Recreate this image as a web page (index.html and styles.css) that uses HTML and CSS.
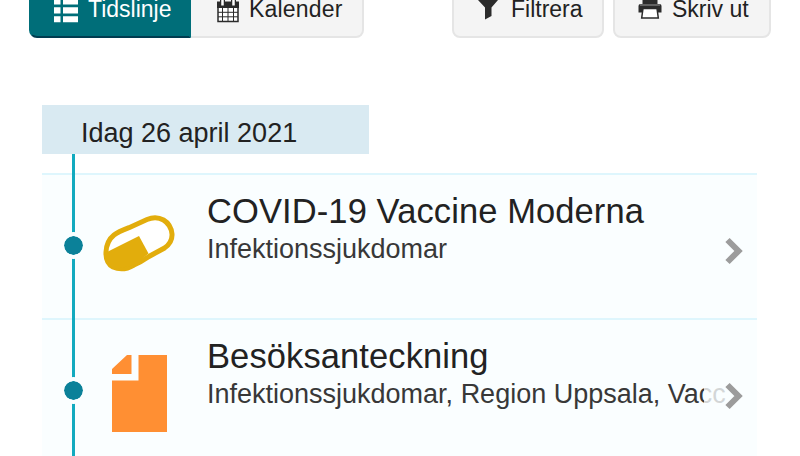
FILE: index.html
```
<!DOCTYPE html>
<html lang="sv">
<head>
    <meta charset="UTF-8">
    <meta name="viewport" content="width=device-width, initial-scale=1.0">
    <title>Journalen - Tidslinje</title>
    <link rel="stylesheet" href="styles.css">
</head>
<body>
    <div class="toolbar">
        <div class="view-switch">
            <button class="btn btn-timeline active">
                <svg width="25" height="26" viewBox="0 0 25 26" fill="currentColor">
                    <path d="M0 1h6.500v6.500H0zM9 1h15v6.500H9zM0 10.200h6.500v6.300H0zM9 10.200h15v6.300H9zM0 19.300h6.500v6H0zM9 19.300h15v6H9z"/>
                </svg>
                <span>Tidslinje</span>
            </button>
            <button class="btn btn-calendar">
                <svg width="22" height="26" viewBox="0 0 22 26">
                    <path d="M1 7h20v17.500H1z" fill="#fff" stroke="#2b2b2b" stroke-width="1.500"/>
                    <path d="M0 4.500h22V11H0z" fill="#2b2b2b"/>
                    <path d="M5.500 11v13M11 11v13M16.500 11v13M1 15.300h20M1 19.800h20" stroke="#2b2b2b" stroke-width="1"/>
                    <path d="M5.500 1v8M16.500 1v8" stroke="#2b2b2b" stroke-width="5"/>
                    <path d="M5.500 1v7.500M16.500 1v7.500" stroke="#fff" stroke-width="2.500"/>
                </svg>
                <span>Kalender</span>
            </button>
        </div>
        <div class="tools">
            <button class="btn btn-filter">
                <svg width="20" height="26" viewBox="0 0 20 26">
                    <path d="M0 1h20v2L13.500 10.500v8.500L7 22.500v-12L0 3z" fill="#2b2b2b"/>
                </svg>
                <span>Filtrera</span>
            </button>
            <button class="btn btn-print">
                <svg width="24" height="26" viewBox="0 0 24 26">
                    <path d="M4.500 1h15v8h-15z" fill="#2b2b2b"/>
                    <path d="M2.500 7h19q2 0 2 2v6.500H.500V9q0-2 2-2z" fill="#2b2b2b"/>
                    <path d="M2 8h20" stroke="#999" stroke-width="1"/>
                    <path d="M5 11.500h14l1.300 9.500H3.700z" fill="#fff" stroke="#2b2b2b" stroke-width="1.500"/>
                </svg>
                <span>Skriv ut</span>
            </button>
        </div>
    </div>

    <main class="timeline">
        <h2 class="date">Idag 26 april 2021</h2>
        <div class="events">
            <a class="event">
                <span class="dot"></span>
                <span class="event-icon">
                    <svg width="72" height="58" viewBox="0 0 72 58">
                        <path d="M11 20Q15 17 26 12.700L44 4.500Q53 .800 60.500 5Q68 9.500 69 19Q69.500 27.500 61.500 33Q56 36 46 41.500Q38 47 31 50Q20 56.500 10 52Q2.500 48 3 37Q3.500 26 11 20z" fill="#fff" stroke="#e2ad0c" stroke-width="5"/>
                        <path d="M5 36.500L36 21L45.500 38.500L32 50L12 54L3 45z" fill="#e2ad0c"/>
                    </svg>
                </span>
                <span class="event-text">
                    <span class="event-title">COVID-19 Vaccine Moderna</span>
                    <span class="event-info">Infektionssjukdomar</span>
                </span>
                <svg class="chevron" width="18" height="28" viewBox="0 0 18 28"><path d="M2.500 3L13.500 14L2.500 25"/></svg>
            </a>
            <a class="event">
                <span class="dot"></span>
                <span class="event-icon document">
                    <svg width="72" height="78" viewBox="0 0 72 78" fill="#ff8f33">
                        <path d="M9 14L24 0h4.500v19H9zM35.500 0H64v77H9V25.500h26.500z"/>
                    </svg>
                </span>
                <span class="event-text">
                    <span class="event-title">Besöksanteckning</span>
                    <span class="event-info">Infektionssjukdomar, Region Uppsala, Vacc</span>
                </span>
                <span class="fade"></span>
                <svg class="chevron" width="18" height="28" viewBox="0 0 18 28"><path d="M2.500 3L13.500 14L2.500 25"/></svg>
            </a>
        </div>
    </main>
</body>
</html>
```
FILE: styles.css
```
* {
    box-sizing: border-box;
}
body {
    margin: 0;
    height: 456px;
    overflow: hidden;
    background: #fff;
    color: #222;
    font-family: "Liberation Sans", Arial, sans-serif;
}
.toolbar {
    display: flex;
    justify-content: space-between;
    margin-top: -19px;
    padding: 0 29px;
}
.view-switch,
.tools {
    display: flex;
}
.tools {
    gap: 9px;
}
.btn {
    display: flex;
    align-items: center;
    height: 57px;
    padding: 0;
    border: 2px solid #e5e5e5;
    border-radius: 8px;
    background: #f4f4f4;
    color: #222;
    font-family: inherit;
    font-size: 23px;
    line-height: 26px;
    white-space: nowrap;
}
.btn svg {
    flex: none;
}
.btn span {
    margin-top: -2px;
}
.btn-timeline {
    width: 162px;
    padding-left: 23px;
    gap: 9px;
    border-radius: 8px 0 0 8px;
}
.btn.active {
    border-color: #006e79;
    border-bottom-color: #003c50;
    background: #006e79;
    color: #fff;
}
.btn-calendar {
    width: 173px;
    padding-left: 26px;
    gap: 10px;
    border-left: 0;
    border-radius: 0 8px 8px 0;
}
.btn-calendar span {
    letter-spacing: 0.2px;
}
.btn-filter {
    width: 152px;
    padding-left: 24px;
    gap: 13px;
}
.btn-print {
    width: 158px;
    padding-left: 23px;
    gap: 10px;
}
.timeline {
    width: 715px;
    margin: 67px 0 0 42px;
}
.date {
    width: 327px;
    height: 49px;
    margin: 0;
    padding-left: 39px;
    background: #d9eaf2;
    font-size: 27px;
    font-weight: normal;
    line-height: 56px;
}
.events {
    position: relative;
    padding-top: 19px;
}
/* vertical line through the dots */
.events::before {
    content: "";
    position: absolute;
    top: 0;
    bottom: 0;
    left: 30px;
    z-index: 1;
    width: 3px;
    background: #12aabf;
}
.event {
    position: relative;
    display: flex;
    height: 145px;
    border-top: 2px solid #def6fd;
    background: #fafeff;
}
.dot {
    z-index: 2;
    flex: none;
    width: 27px;
    height: 27px;
    margin: 57px 0 0 18px;
    border: 4px solid #fafeff;
    border-radius: 50%;
    background: #0b8199;
    background-clip: padding-box;
}
.event-icon {
    display: flex;
    flex: none;
    align-items: center;
    width: 72px;
    height: 78px;
    margin: 30px 0 0 16px;
}
.event-icon.document {
    margin-top: 35px;
}
.event-text {
    width: 520px;
    margin: 16px 0 0 32px;
    overflow: hidden;
    white-space: nowrap;
}
.event-title,
.event-info {
    display: block;
}
.event-title {
    height: 40px;
    font-size: 34.5px;
    line-height: 40px;
    letter-spacing: 0.1px;
}
.event-info {
    font-size: 27px;
    line-height: 36px;
    color: #383838;
}
.fade {
    position: absolute;
    top: 50px;
    right: 29px;
    width: 24px;
    height: 50px;
    background: rgba(250, 254, 255, 0.8);
}
.chevron {
    position: absolute;
    top: 62px;
    right: 14px;
    fill: none;
    stroke: #9c9c9c;
    stroke-width: 6px;
}
```
